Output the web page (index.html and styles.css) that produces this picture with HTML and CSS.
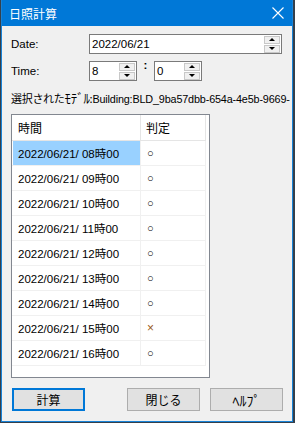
FILE: index.html
```html
<!DOCTYPE html>
<html lang="ja">
<head>
    <meta charset="UTF-8">
    <title>日照計算</title>
    <link rel="stylesheet" href="styles.css">
</head>
<body>
    <div class="window">
        <div class="titlebar">
            <span class="title">日照計算</span>
            <svg class="close" width="12" height="12" viewBox="0 0 12 12">
                <path d="M0.5 0.5 L11.5 11.5 M11.5 0.5 L0.5 11.5" stroke="#fff" stroke-width="1.1" fill="none"/>
            </svg>
        </div>

        <div class="content">
            <div class="row date-row">
                <label class="label">Date:</label>
                <div class="field date-field">
                    <span class="value">2022/06/21</span>
                    <div class="spin">
                        <div class="spin-btn"><span class="arrow up"></span></div>
                        <div class="spin-btn"><span class="arrow down"></span></div>
                    </div>
                </div>
            </div>

            <div class="row time-row">
                <label class="label">Time:</label>
                <div class="field time-field">
                    <span class="value">8</span>
                    <div class="spin">
                        <div class="spin-btn"><span class="arrow up"></span></div>
                        <div class="spin-btn"><span class="arrow down"></span></div>
                    </div>
                </div>
                <span class="colon">:</span>
                <div class="field time-field">
                    <span class="value">0</span>
                    <div class="spin">
                        <div class="spin-btn"><span class="arrow up"></span></div>
                        <div class="spin-btn"><span class="arrow down"></span></div>
                    </div>
                </div>
            </div>

            <div class="model">選択された<span class="kana">ﾓﾃﾞﾙ</span>:<span class="model-id">Building:BLD_9ba57dbb-654a-4e5b-9669-</span></div>

            <div class="listview">
                <table>
                    <tr class="head"><td class="col-time">時間</td><td class="col-judge">判定</td></tr>
                    <tr class="selected"><td class="col-time">2022/06/21/ 08時00</td><td class="col-judge mark">○</td></tr>
                    <tr><td class="col-time">2022/06/21/ 09時00</td><td class="col-judge mark">○</td></tr>
                    <tr><td class="col-time">2022/06/21/ 10時00</td><td class="col-judge mark">○</td></tr>
                    <tr><td class="col-time">2022/06/21/ 11時00</td><td class="col-judge mark">○</td></tr>
                    <tr><td class="col-time">2022/06/21/ 12時00</td><td class="col-judge mark">○</td></tr>
                    <tr><td class="col-time">2022/06/21/ 13時00</td><td class="col-judge mark">○</td></tr>
                    <tr><td class="col-time">2022/06/21/ 14時00</td><td class="col-judge mark">○</td></tr>
                    <tr><td class="col-time">2022/06/21/ 15時00</td><td class="col-judge mark cross">×</td></tr>
                    <tr><td class="col-time">2022/06/21/ 16時00</td><td class="col-judge mark">○</td></tr>
                </table>
            </div>

            <div class="buttons">
                <button class="btn default">計算</button>
                <button class="btn close-btn">閉じる</button>
                <button class="btn help-btn">ﾍﾙﾌﾟ</button>
            </div>
        </div>
    </div>
</body>
</html>
```

FILE: styles.css
```css
body {
    margin: 0;
    padding: 0;
    background-color: #34404c;
    font-family: 'Liberation Sans', 'Noto Sans CJK JP', sans-serif;
    font-size: 11.5px;
    color: #000;
}
.window {
    box-sizing: border-box;
    margin-left: 1px;
    width: 292px;
    height: 422px;
    background-color: #f0f0f0;
    border: 1px solid #1883d7;
    border-top: none;
    overflow: hidden;
}
.titlebar {
    height: 26px;
    margin: 0 -1px;
    padding: 0 9px 0 8px;
    background-color: #0078d7;
    color: white;
    display: flex;
    align-items: center;
    justify-content: space-between;
}
.title {
    font-family: 'Noto Sans CJK JP', sans-serif;
    font-size: 12px;
}
.content {
    padding: 8px 0 0 9px;
}
.row {
    display: flex;
    align-items: center;
    height: 20px;
}
.time-row {
    margin-top: 7px;
}
.label {
    width: 78px;
}
.field {
    box-sizing: border-box;
    height: 20px;
    background-color: white;
    border: 1px solid #7a7a7a;
    display: flex;
    align-items: center;
    justify-content: space-between;
    padding: 0 1px 0 2px;
}
.date-field {
    width: 193px;
}
.time-field {
    width: 48px;
}
.colon {
    width: 17px;
    align-self: flex-start;
    text-align: center;
    font-weight: bold;
    line-height: 10px;
    margin-top: -1px;
}
.spin {
    display: flex;
    flex-direction: column;
    gap: 1px;
}
.spin-btn {
    box-sizing: border-box;
    width: 16px;
    height: 8px;
    background-color: #f0f0f0;
    border: 1px solid #c8c8c8;
    display: flex;
    align-items: center;
    justify-content: center;
}
.arrow {
    width: 0;
    height: 0;
    border-left: 3.5px solid transparent;
    border-right: 3.5px solid transparent;
}
.arrow.up {
    border-bottom: 3px solid #000;
}
.arrow.down {
    border-top: 3px solid #000;
}
.model {
    margin-top: 9px;
    height: 16px;
    line-height: 16px;
    white-space: nowrap;
    font-family: 'Noto Sans CJK JP', sans-serif;
    font-size: 11px;
    letter-spacing: -0.3px;
}
.kana {
    font-size: 13px;
}
.model-id {
    font-family: 'Liberation Sans', sans-serif;
    font-size: 10.8px;
    letter-spacing: -0.15px;
}
.listview {
    box-sizing: border-box;
    margin-top: 8px;
    width: 199px;
    height: 264px;
    background-color: white;
    border: 1px solid #828790;
}
table {
    border-collapse: collapse;
}
td {
    box-sizing: border-box;
    height: 25px;
    padding: 0 0 0 5px;
    border-bottom: 1px solid #f0f0f0;
    border-right: 1px solid #f0f0f0;
    white-space: nowrap;
}
.col-time {
    width: 128px;
    border-left: 1px solid #fff;
}
.col-judge {
    width: 65px;
}
.head td {
    font-family: 'Noto Sans CJK JP', sans-serif;
    font-size: 12px;
    border-bottom-color: #e5e5e5;
    border-right-color: #e5e5e5;
}
.selected .col-time {
    background-color: #99d1ff;
}
.mark {
    font-size: 11px;
    padding-left: 6px;
}
.cross {
    color: #9a5a20;
    font-size: 12px;
}
.buttons {
    display: flex;
    margin-top: 10px;
    padding-left: 1px;
}
.btn {
    box-sizing: border-box;
    width: 73px;
    height: 23px;
    background-color: #e1e1e1;
    border: 1px solid #adadad;
    font-family: 'Noto Sans CJK JP', sans-serif;
    font-size: 12px;
    padding: 0;
    color: #000;
}
.btn.default {
    border: 2px solid #0078d7;
}
.close-btn {
    margin-left: 42px;
}
.help-btn {
    margin-left: 10px;
    font-size: 14px;
}
```
